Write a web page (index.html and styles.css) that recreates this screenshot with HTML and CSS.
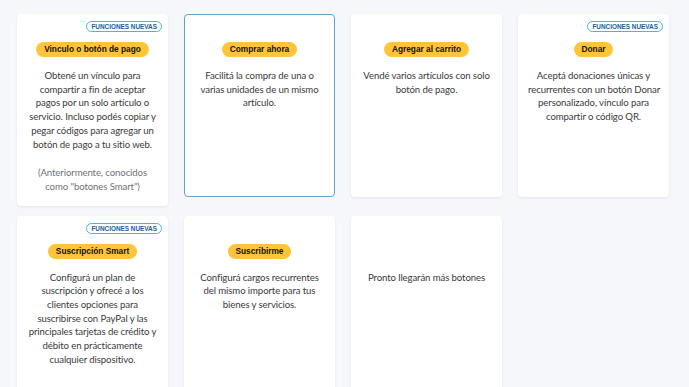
FILE: index.html
```html
<!DOCTYPE html>
<html lang="es">
<head>
    <meta charset="UTF-8">
    <meta name="viewport" content="width=device-width, initial-scale=1.0">
    <title>Botones de pago</title>
    <link rel="stylesheet" href="styles.css">
</head>
<body>
    <div class="grid">
        <div class="card">
            <span class="badge">Funciones nuevas</span>
            <div class="pill">Vinculo o botón de pago</div>
            <p class="desc">Obtené un vínculo para compartir a fin de aceptar pagos por un solo artículo o servicio. Incluso podés copiar y pegar códigos para agregar un botón de pago a tu sitio web.</p>
            <p class="note">(Anteriormente, conocidos como "botones Smart")</p>
        </div>

        <div class="card selected">
            <div class="pill">Comprar ahora</div>
            <p class="desc">Facilitá la compra de una o varias unidades de un mismo artículo.</p>
        </div>

        <div class="card">
            <div class="pill">Agregar al carrito</div>
            <p class="desc">Vendé varios artículos con solo botón de pago.</p>
        </div>

        <div class="card">
            <span class="badge">Funciones nuevas</span>
            <div class="pill">Donar</div>
            <p class="desc">Aceptá donaciones únicas y recurrentes&nbsp;con&nbsp;un&nbsp;botón&nbsp;Donar personalizado, vínculo para compartir o código QR.</p>
        </div>

        <div class="card">
            <span class="badge">Funciones nuevas</span>
            <div class="pill">Suscripción Smart</div>
            <p class="desc">Configurá un plan de suscripción y ofrecé a los clientes opciones para suscribirse con PayPal y las principales tarjetas de crédito y débito en prácticamente cualquier dispositivo.</p>
        </div>

        <div class="card">
            <div class="pill">Suscribirme</div>
            <p class="desc">Configurá cargos recurrentes del mismo importe para tus bienes y servicios.</p>
        </div>

        <div class="card">
            <div class="pill-space"></div>
            <p class="desc">Pronto llegarán más botones</p>
        </div>
    </div>
</body>
</html>
```

FILE: styles.css
```css
body {
    margin: 0;
    background-color: #f5f7fa;
    font-family: Lato, "Open Sans", sans-serif;
}
.grid {
    display: grid;
    grid-template-columns: repeat(4, 151px);
    column-gap: 16px;
    row-gap: 10px;
    align-items: start;
    padding: 14px 0 0 17px;
}
.card {
    position: relative;
    box-sizing: border-box;
    min-height: 183px;
    background-color: white;
    border-radius: 4px;
    box-shadow: 0 1px 3px rgba(0, 0, 0, 0.08);
    padding: 27px 9px 11px;
    text-align: center;
    border: 1px solid transparent;
}
.card.selected {
    border-color: #5ba5cf;
    box-shadow: none;
}
.badge {
    position: absolute;
    top: 6px;
    right: 5px;
    height: 9px;
    line-height: 9px;
    padding: 0 4px;
    border: 1px solid #45b8d8;
    border-radius: 10px;
    font-family: "Liberation Sans", Arial, sans-serif;
    font-size: 6.4px;
    font-weight: bold;
    text-transform: uppercase;
    color: #1a5b9e;
}
.pill {
    display: block;
    width: fit-content;
    margin: 0 auto;
    height: 15px;
    line-height: 15px;
    padding: 0 8px;
    background-color: #ffc439;
    border-radius: 8px;
    font-family: "Liberation Sans", Arial, sans-serif;
    font-size: 8.3px;
    font-weight: bold;
    color: #111;
}
.pill-space {
    height: 15px;
}
.desc {
    margin: 12px 0 0;
    font-size: 9.6px;
    letter-spacing: -0.1px;
    line-height: 13.7px;
    color: #3a3a3a;
}
.note {
    margin: 15px 0 0;
    font-size: 9.6px;
    letter-spacing: -0.1px;
    line-height: 13.7px;
    color: #6c7378;
}
```
